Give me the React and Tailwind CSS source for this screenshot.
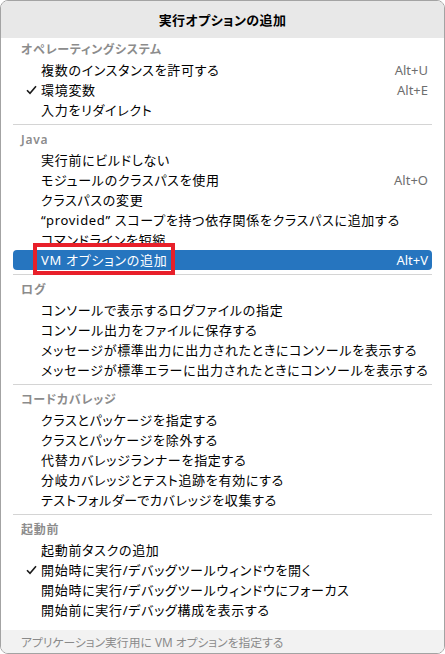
import React from "react";

const sections = [
  {
    title: "オペレーティングシステム",
    items: [
      { label: "複数のインスタンスを許可する", key: "Alt+U" },
      { label: "環境変数", key: "Alt+E", checked: true },
      { label: "入力をリダイレクト" },
    ],
  },
  {
    title: "Java",
    items: [
      { label: "実行前にビルドしない" },
      { label: "モジュールのクラスパスを使用", key: "Alt+O" },
      { label: "クラスパスの変更" },
      { label: "“provided” スコープを持つ依存関係をクラスパスに追加する" },
      { label: "コマンドラインを短縮" },
      { label: "VM オプションの追加", key: "Alt+V", selected: true },
    ],
  },
  {
    title: "ログ",
    items: [
      { label: "コンソールで表示するログファイルの指定" },
      { label: "コンソール出力をファイルに保存する" },
      { label: "メッセージが標準出力に出力されたときにコンソールを表示する" },
      { label: "メッセージが標準エラーに出力されたときにコンソールを表示する" },
    ],
  },
  {
    title: "コードカバレッジ",
    items: [
      { label: "クラスとパッケージを指定する" },
      { label: "クラスとパッケージを除外する" },
      { label: "代替カバレッジランナーを指定する" },
      { label: "分岐カバレッジとテスト追跡を有効にする" },
      { label: "テストフォルダーでカバレッジを収集する" },
    ],
  },
  {
    title: "起動前",
    items: [
      { label: "起動前タスクの追加" },
      { label: "開始時に実行/デバッグツールウィンドウを開く", checked: true },
      { label: "開始時に実行/デバッグツールウィンドウにフォーカス" },
      { label: "開始前に実行/デバッグ構成を表示する" },
    ],
  },
];

function Check({ light }) {
  return (
    <svg width="11" height="10" viewBox="0 0 11 10" className="shrink-0">
      <path
        d="M1 5.2 L4 8.3 L10 1.2"
        fill="none"
        stroke={light ? "#fff" : "#1a1a1a"}
        strokeWidth="1.6"
      />
    </svg>
  );
}

function Row({ item }) {
  const sel = item.selected;
  return (
    <div
      className={`relative mx-[12px] h-[20px] flex items-center rounded-[4px] pr-[4px] ${
        sel ? "bg-[#2675bf] text-white" : "text-black"
      }`}
    >
      <div className="w-[28px] shrink-0 pl-[13px] flex items-center">
        {item.checked && <Check light={sel} />}
      </div>
      {sel ? (
        <span className="relative whitespace-nowrap tracking-[0.7px]">
          {item.label}
          {/* red annotation box */}
          <span className="absolute left-[-8px] right-[-8px] top-[-7px] bottom-[-5px] border-4 border-[#e8202a]" />
        </span>
      ) : (
        <span className="whitespace-nowrap tracking-[0.7px]">{item.label}</span>
      )}
      <span
        className={`ml-auto whitespace-nowrap ${
          sel ? "text-white" : "text-[#6e6e6e]"
        }`}
      >
        {item.key}
      </span>
    </div>
  );
}

export default function App() {
  return (
    <div
      className="w-[445px] h-[654px] flex flex-col bg-white border border-[#a3a3a3] rounded-[8px] overflow-hidden text-[13px] leading-[20px] [font-feature-settings:'palt']"
      style={{ fontFamily: '"Noto Sans", "Noto Sans CJK JP", sans-serif' }}
    >
      {/* TITLE */}
      <div className="h-[37px] shrink-0 bg-[#e8e8e8] flex items-center justify-center font-bold text-[13px] tracking-[0.4px] text-black">
        実行オプションの追加
      </div>

      {/* LIST */}
      <div className="flex-1 pt-[2px]">
        {sections.map((s, i) => (
          <div key={s.title}>
            {i > 0 && <div className="mx-[12px] mt-[4px] mb-[5px] h-px bg-[#d4d4d4]" />}
            <div className="h-[20px] pl-[20px] flex items-center text-[12px] font-semibold tracking-[0.7px] text-[#8c8c8c]">
              {s.title}
            </div>
            {s.items.map((it) => (
              <Row key={it.label} item={it} />
            ))}
          </div>
        ))}
      </div>

      {/* FOOTER */}
      <div className="h-[23px] shrink-0 bg-[#f2f2f2] pl-[20px] flex items-center text-[11.8px] text-[#8a8a8a]">
        アプリケーション実行用に VM オプションを指定する
      </div>
    </div>
  );
}
